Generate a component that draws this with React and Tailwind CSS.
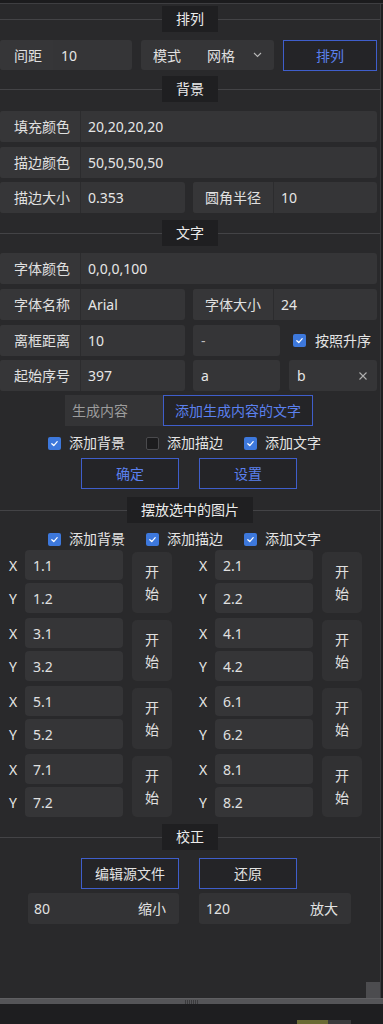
import React from "react";

const FONT = "font-['Noto_Sans','Noto_Sans_CJK_SC',sans-serif]";

function Header({ title }) {
  return (
    <div className="flex items-center h-[26px] w-[380px] shrink-0">
      <div className="flex-1 h-px bg-[#434346]" />
      <div className="h-full px-[14px] bg-[#1f1f21] text-[14px] text-[#ececec] flex items-center leading-none">
        {title}
      </div>
      <div className="flex-1 h-px bg-[#434346]" />
    </div>
  );
}

function Check({ on = true }) {
  if (!on)
    return <div className="w-[13px] h-[13px] rounded-[2px] bg-[#1c1c1e] border border-[#4a4a4d]" />;
  return (
    <div className="w-[13px] h-[13px] rounded-[2px] bg-[#3d78dc] flex items-center justify-center">
      <svg width="9" height="9" viewBox="0 0 10 10">
        <path d="M2 5.2 L4.2 7.3 L8 3" fill="none" stroke="#ffffff" strokeWidth="1.4" strokeLinecap="round" strokeLinejoin="round" />
      </svg>
    </div>
  );
}

function CheckItem({ on, label }) {
  return (
    <div className="w-[98px] flex items-center gap-[8px]">
      <Check on={on} />
      <span className="text-[14px] text-[#e4e4e4] leading-none whitespace-nowrap">{label}</span>
    </div>
  );
}

function LabelField({ label, value, w, lw = "w-[81px]", lpl = "pl-[14px]" }) {
  return (
    <div className={`h-[31px] ${w} bg-[#353537] rounded-[3px] flex items-stretch overflow-hidden`}>
      <div className={`${lw} ${lpl} flex items-center border-r border-[#2c2c2e] bg-[#363638] text-[14px] text-[#e0e0e0] whitespace-nowrap`}>
        {label}
      </div>
      <div className="flex-1 pl-[7px] flex items-center text-[14px] text-[#e6e6e6]">{value}</div>
    </div>
  );
}

function BlueBtn({ children, w = "w-[98px]", text = "text-[#5b80ee]" }) {
  return (
    <div className={`h-[31px] ${w} border border-[#3f5ecb] bg-[#242427] flex items-center justify-center text-[14px] ${text}`}>
      {children}
    </div>
  );
}

function XYHalf({ x, y }) {
  return (
    <div className="w-[190px] flex items-stretch pl-[9px]">
      <div className="flex flex-col gap-[3px]">
        <div className="flex items-center h-[30px]">
          <span className="w-[16px] text-[14px] text-[#e6e6e6]">X</span>
          <div className="w-[98px] h-[30px] bg-[#353537] rounded-[4px] flex items-center pl-[8px] text-[14px] text-[#e0e0e0]">{x}</div>
        </div>
        <div className="flex items-center h-[30px]">
          <span className="w-[16px] text-[14px] text-[#e6e6e6]">Y</span>
          <div className="w-[98px] h-[30px] bg-[#353537] rounded-[4px] flex items-center pl-[8px] text-[14px] text-[#e0e0e0]">{y}</div>
        </div>
      </div>
      <div className="ml-[9px] mt-[2px] w-[40px] h-[61px] bg-[#313133] rounded-[5px] flex flex-col items-center justify-center text-[14px] text-[#e0e0e0] leading-[22px]">
        <span>开</span>
        <span>始</span>
      </div>
    </div>
  );
}

function Block({ a, b }) {
  return (
    <div className="mt-[5px] h-[63px] flex w-[380px] first:mt-[3px]">
      <XYHalf x={a[0]} y={a[1]} />
      <XYHalf x={b[0]} y={b[1]} />
    </div>
  );
}

export default function App() {
  return (
    <div className={`w-[383px] h-[1024px] bg-[#1f1f21] flex flex-col overflow-hidden ${FONT}`}>
      <div className="h-[4px] shrink-0 bg-[#1b1b1d] border-b border-[#3e3e41]" />
      <div className="flex-1 w-[381px] bg-[#29292b] border-r border-[#3a3a3d] flex flex-col">
        <div className="mt-[2px]"><Header title="排列" /></div>

        <div className="mt-[8px] h-[30px] flex gap-[9px] w-[377px]">
          <div className="w-[132px] h-[30px] bg-[#353537] rounded-[3px] flex items-stretch overflow-hidden">
            <div className="w-[53px] pl-[14px] flex items-center bg-[#363638] text-[14px] text-[#e0e0e0]">间距</div>
            <div className="flex-1 pl-[8px] flex items-center text-[14px] text-[#e6e6e6]">10</div>
          </div>
          <div className="w-[133px] h-[30px] bg-[#353537] rounded-[3px] flex items-center pl-[12px] text-[14px] text-[#e0e0e0]">
            <span className="w-[54px]">模式</span>
            <span>网格</span>
            <svg className="ml-[18px]" width="9" height="6" viewBox="0 0 9 6">
              <path d="M1 1 L4.5 4.5 L8 1" fill="none" stroke="#b8b8b8" strokeWidth="1.1" />
            </svg>
          </div>
          <BlueBtn w="w-[94px]">排列</BlueBtn>
        </div>

        <div className="mt-[6px]"><Header title="背景" /></div>

        <div className="mt-[9px]"><LabelField label="填充颜色" value="20,20,20,20" w="w-[377px]" /></div>
        <div className="mt-[5px]"><LabelField label="描边颜色" value="50,50,50,50" w="w-[377px]" /></div>
        <div className="mt-[4px] flex gap-[8px] w-[377px]">
          <LabelField label="描边大小" value="0.353" w="w-[185px]" />
          <LabelField label="圆角半径" value="10" w="w-[184px]" lw="w-[81px]" lpl="pl-[12px]" />
        </div>

        <div className="mt-[7px]"><Header title="文字" /></div>

        <div className="mt-[7px]"><LabelField label="字体颜色" value="0,0,0,100" w="w-[377px]" /></div>
        <div className="mt-[5px] flex gap-[8px] w-[377px]">
          <LabelField label="字体名称" value="Arial" w="w-[185px]" />
          <LabelField label="字体大小" value="24" w="w-[184px]" lw="w-[81px]" lpl="pl-[12px]" />
        </div>
        <div className="mt-[5px] flex w-[377px] items-center">
          <LabelField label="离框距离" value="10" w="w-[185px]" />
          <div className="ml-[8px] w-[87px] h-[31px] bg-[#353537] rounded-[3px] flex items-center pl-[8px] text-[14px] text-[#bdbdbd]">-</div>
          <div className="ml-[13px] flex items-center gap-[9px]">
            <Check on />
            <span className="text-[14px] text-[#e4e4e4] whitespace-nowrap">按照升序</span>
          </div>
        </div>
        <div className="mt-[4px] flex w-[377px]">
          <LabelField label="起始序号" value="397" w="w-[185px]" />
          <div className="ml-[8px] w-[87px] h-[31px] bg-[#353537] rounded-[3px] flex items-center pl-[8px] text-[14px] text-[#e6e6e6]">a</div>
          <div className="ml-[9px] w-[88px] h-[31px] bg-[#353537] rounded-[3px] flex items-center justify-between pl-[8px] pr-[10px] text-[14px] text-[#e6e6e6]">
            <span>b</span>
            <svg width="8" height="8" viewBox="0 0 8 8">
              <path d="M0.5 0.5 L7.5 7.5 M7.5 0.5 L0.5 7.5" stroke="#b0b0b0" strokeWidth="1.1" />
            </svg>
          </div>
        </div>

        <div className="mt-[4px] flex pl-[65px] h-[31px]">
          <div className="w-[98px] h-[31px] bg-[#343436] flex items-center pl-[7px] text-[14px] text-[#9c9c9c]">生成内容</div>
          <BlueBtn w="w-[150px]">添加生成内容的文字</BlueBtn>
        </div>

        <div className="mt-[9px] h-[16px] flex items-center pl-[48px]">
          <CheckItem on label="添加背景" />
          <CheckItem on={false} label="添加描边" />
          <CheckItem on label="添加文字" />
        </div>

        <div className="mt-[7px] flex pl-[81px] gap-[20px]">
          <BlueBtn>确定</BlueBtn>
          <BlueBtn>设置</BlueBtn>
        </div>

        <div className="mt-[8px]"><Header title="摆放选中的图片" /></div>

        <div className="mt-[8px] h-[16px] flex items-center pl-[48px]">
          <CheckItem on label="添加背景" />
          <CheckItem on label="添加描边" />
          <CheckItem on label="添加文字" />
        </div>

        <div className="mt-[3px] flex flex-col gap-[5px]">
          <div className="h-[63px] flex w-[380px]">
            <XYHalf x="1.1" y="1.2" />
            <XYHalf x="2.1" y="2.2" />
          </div>
          <div className="h-[63px] flex w-[380px]">
            <XYHalf x="3.1" y="3.2" />
            <XYHalf x="4.1" y="4.2" />
          </div>
          <div className="h-[63px] flex w-[380px]">
            <XYHalf x="5.1" y="5.2" />
            <XYHalf x="6.1" y="6.2" />
          </div>
          <div className="h-[63px] flex w-[380px]">
            <XYHalf x="7.1" y="7.2" />
            <XYHalf x="8.1" y="8.2" />
          </div>
        </div>

        <div className="mt-[7px]"><Header title="校正" /></div>

        <div className="mt-[8px] flex pl-[81px] gap-[20px]">
          <BlueBtn text="text-[#e2e2e2]">编辑源文件</BlueBtn>
          <BlueBtn text="text-[#e2e2e2]">还原</BlueBtn>
        </div>

        <div className="mt-[4px] flex pl-[28px] gap-[20px]">
          <div className="w-[151px] h-[31px] bg-[#333335] rounded-[3px] flex items-center justify-between pl-[6px] pr-[13px] text-[14px] text-[#e2e2e2]">
            <span>80</span>
            <span>缩小</span>
          </div>
          <div className="w-[152px] h-[31px] bg-[#333335] rounded-[3px] flex items-center justify-between pl-[7px] pr-[13px] text-[14px] text-[#e2e2e2]">
            <span>120</span>
            <span>放大</span>
          </div>
        </div>

        <div className="flex-1" />
        <div className="h-[16px] flex justify-end">
          <div className="w-[14px] h-[16px] bg-[#4c4c4f]" />
        </div>
      </div>
      <div className="h-[6px] shrink-0 bg-[#555558] border-t border-[#5f5f62] flex items-center justify-center gap-[1px]">
        <div className="w-px h-[4px] bg-[#3a3a3c]" />
        <div className="w-px h-[4px] bg-[#3a3a3c]" />
        <div className="w-px h-[4px] bg-[#3a3a3c]" />
        <div className="w-px h-[4px] bg-[#3a3a3c]" />
        <div className="w-px h-[4px] bg-[#3a3a3c]" />
        <div className="w-px h-[4px] bg-[#3a3a3c]" />
        <div className="w-px h-[4px] bg-[#3a3a3c]" />
      </div>
      <div className="h-[20px] shrink-0 bg-[#1e1e20] flex items-end pl-[297px]">
        <div className="w-[31px] h-[4px] bg-[#6a6a34]" />
        <div className="w-[23px] h-[4px] bg-[#3a3a3c]" />
      </div>
    </div>
  );
}
